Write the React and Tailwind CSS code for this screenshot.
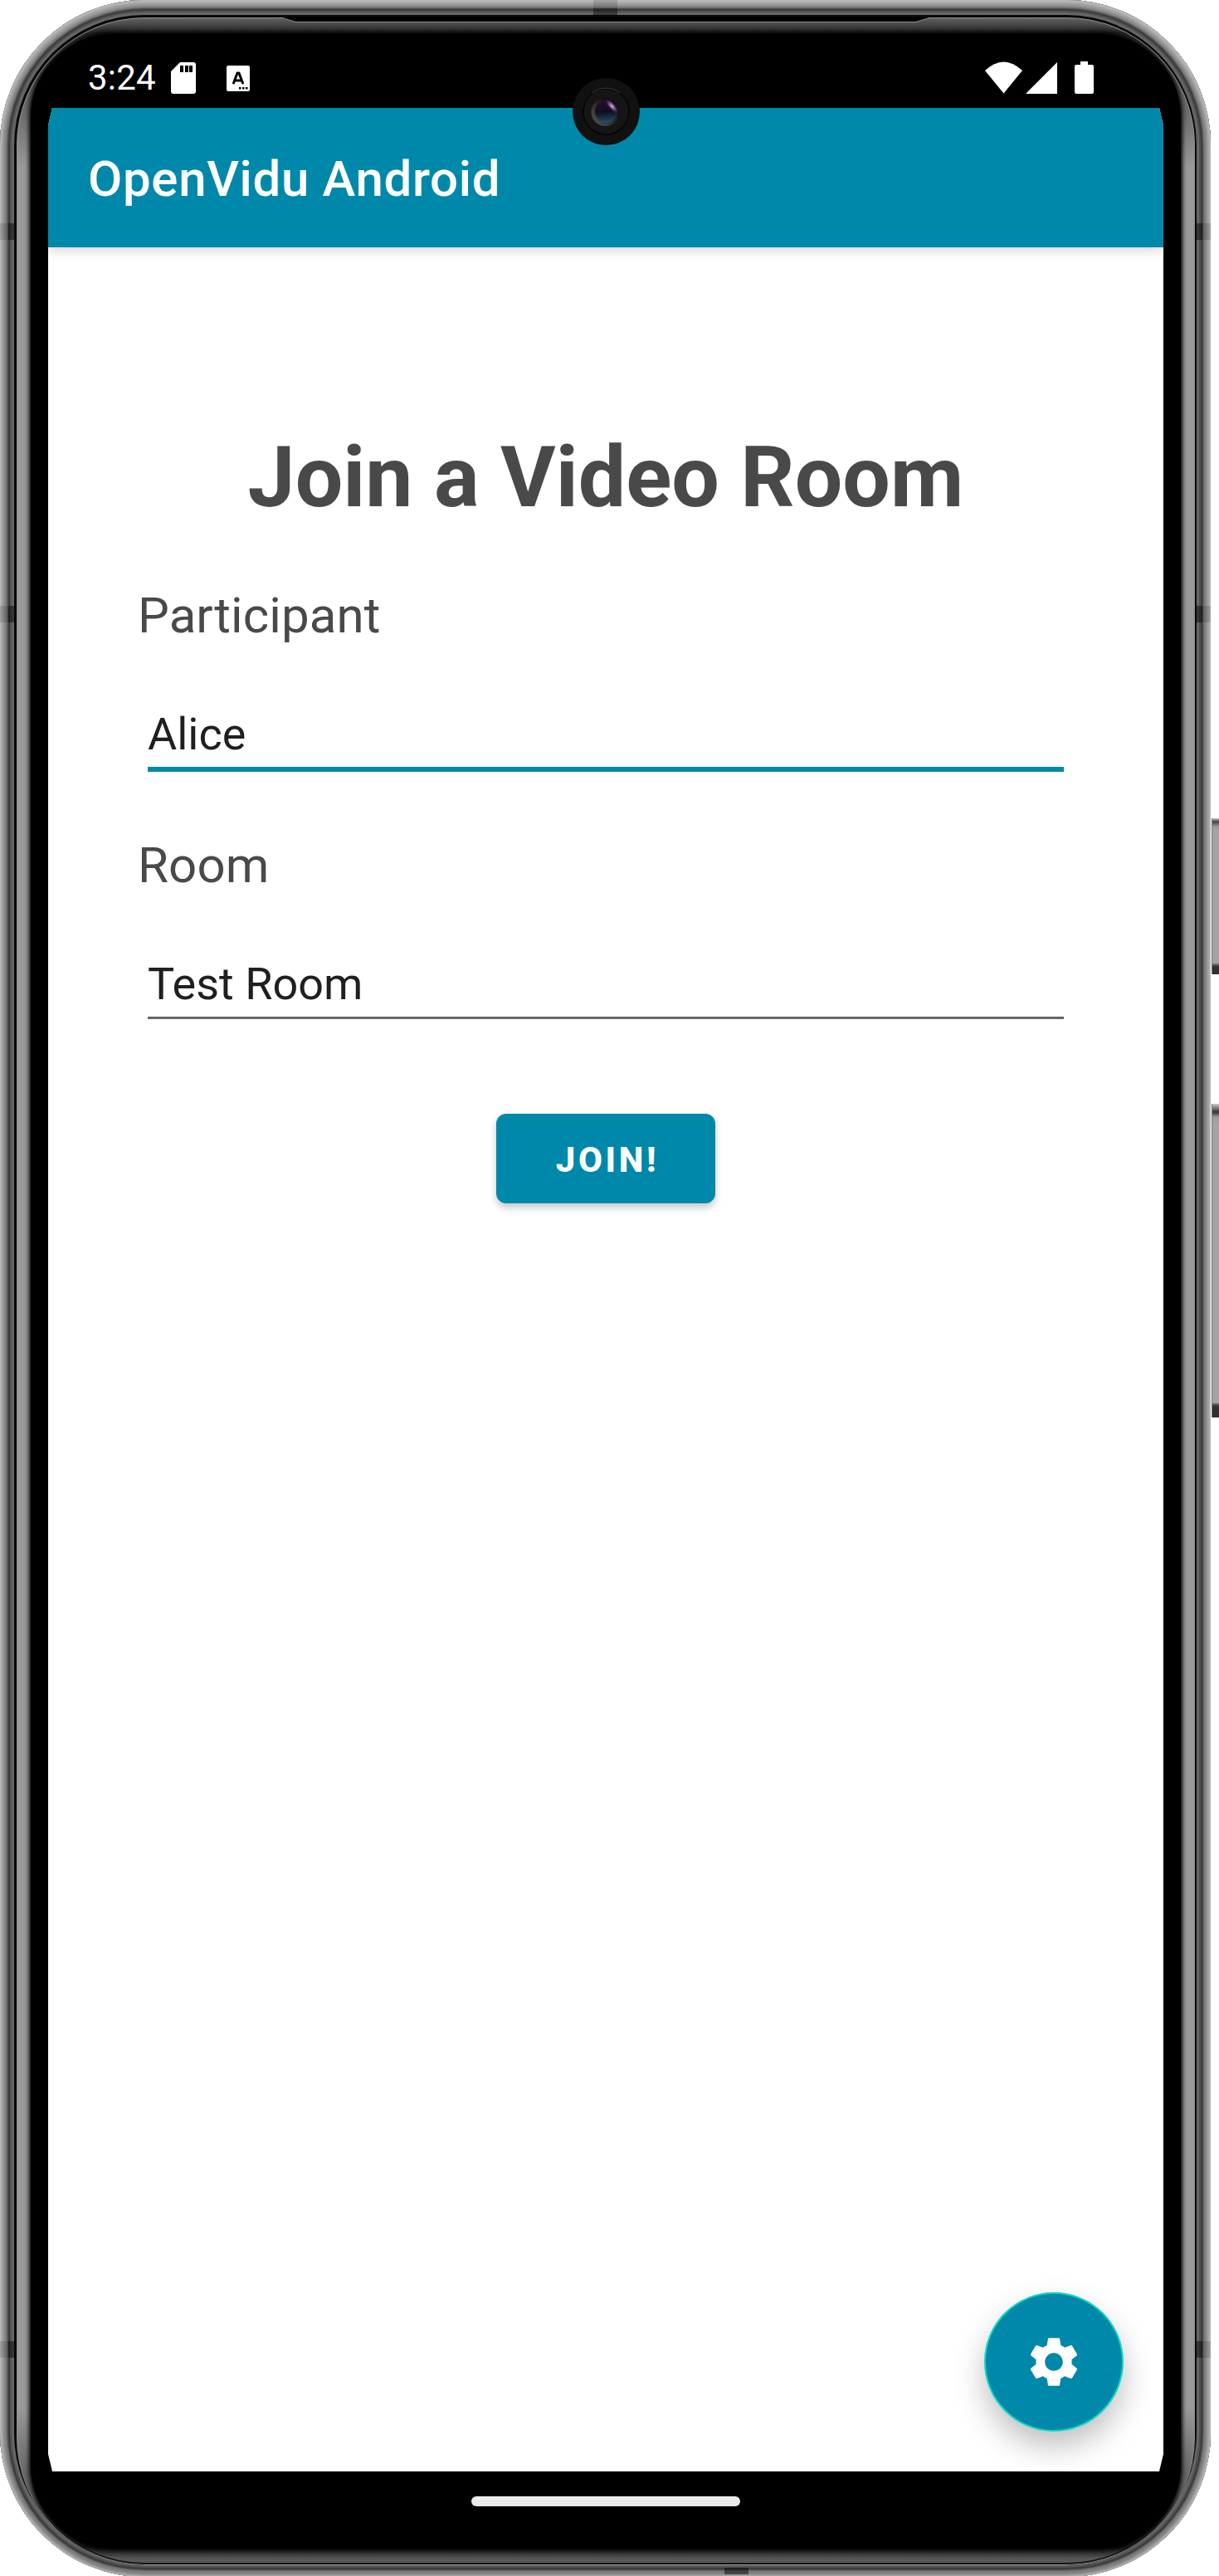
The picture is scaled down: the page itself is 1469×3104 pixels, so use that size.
const GEAR =
  "M19.14 12.94c.04-.3.06-.61.06-.94 0-.32-.02-.64-.07-.94l2.03-1.58a.49.49 0 0 0 .12-.61l-1.92-3.32a.488.488 0 0 0-.59-.22l-2.39.96c-.5-.38-1.03-.7-1.62-.94l-.36-2.54a.484.484 0 0 0-.48-.41h-3.84c-.24 0-.43.17-.47.41l-.36 2.54c-.59.24-1.13.57-1.62.94l-2.39-.96c-.22-.08-.47 0-.59.22L2.74 8.87c-.12.21-.08.47.12.61l2.03 1.58c-.05.3-.09.63-.09.94s.02.64.07.94l-2.03 1.58a.49.49 0 0 0-.12.61l1.92 3.32c.12.22.37.29.59.22l2.39-.96c.5.38 1.03.7 1.62.94l.36 2.54c.05.24.24.41.48.41h3.84c.24 0 .44-.17.47-.41l.36-2.54c.59-.24 1.13-.56 1.62-.94l2.39.96c.22.08.47 0 .59-.22l1.92-3.32c.12-.22.07-.47-.12-.61l-2.01-1.58zM12 15.6c-1.98 0-3.6-1.62-3.6-3.6s1.62-3.6 3.6-3.6 3.6 1.62 3.6 3.6-1.62 3.6-3.6 3.6z";

function SideButtons() {
  return (
    <div className="flex flex-1 flex-col gap-[156px] pl-px pt-[986px]">
      <div className="h-[188px] border-l border-[#777] bg-[linear-gradient(180deg,#ccc_0,#444_4px,#999_10px,#a4a4a4_14px,#a4a4a4_174px,#555_177px,#303030_179px)]" />
      <div className="h-[378px] border-l border-[#777] bg-[linear-gradient(180deg,#ccc_0,#333_10px,#999_16px,#a4a4a4_24px,#a4a4a4_360px,#444_363px,#303030_366px)]" />
    </div>
  );
}

function AntennaRow() {
  return (
    <div className="flex h-5 justify-between">
      <div className="w-[18px] bg-[linear-gradient(90deg,#0002_0,#0002_10px,#0007_10px)]" />
      <div className="w-[18px] bg-[linear-gradient(270deg,#0002_0,#0002_10px,#0007_10px)]" />
    </div>
  );
}

function AntennaBands() {
  return (
    <div className="flex flex-col [grid-area:1/1]">
      <div className="mx-auto h-[19px] w-[29px] bg-[linear-gradient(180deg,#0002_0,#0002_10px,#0006_10px)]" />
      <div className="mt-[250px] flex h-[2572px] flex-col">
        <AntennaRow />
        <div className="h-[441px]" />
        <AntennaRow />
        <div className="flex-1" />
        <AntennaRow />
      </div>
      <div className="mb-[3px] ml-[873px] mt-auto h-2 w-[29px] bg-[#0007]" />
    </div>
  );
}

function Bezel() {
  return (
    <div className="mb-[14px] ml-[20px] mr-[19px] mt-[21px] grid overflow-hidden rounded-[154px] bg-[linear-gradient(180deg,#5c5c5c_0,#4a4a4a_8px,#1c1c1c_19px,#3a3a3a_50px,#999_180px,#999_2880px,#444_3010px,#101010_3048px,#555_3062px,#5a5a5a_3068px)] [grid-area:1/1]">
      <div className="mx-[17px] my-[20px] rounded-[100px] bg-black shadow-[0_0_5px_2px_#000] [grid-area:1/1]" />
      <div className="rounded-[154px] shadow-[inset_0_0_0_1px_#8a8a8a,inset_0_-3px_0_0_#151515,inset_0_0_6px_1px_rgba(190,190,190,0.18)] [grid-area:1/1]" />
      <div className="mx-auto h-[6px] w-[783px] bg-[#909090] [clip-path:polygon(0_0,100%_0,765px_100%,18px_100%)] [grid-area:1/1]" />
      <div className="mx-auto h-[5px] w-[779px] bg-black [clip-path:polygon(0_0,100%_0,763px_100%,16px_100%)] [grid-area:1/1]" />
    </div>
  );
}

function StatusBar() {
  return (
    <div className="flex h-[130px] items-start justify-between pl-[106px] pr-[141px] pt-[73px]">
      <div className="flex items-start">
        <span className="w-[82px] whitespace-nowrap text-[42px] leading-[42px] tracking-[0.2px]">
          3:24
        </span>
        <svg className="ml-[18px] mt-[2px] h-[38px] w-[30px]" viewBox="0 0 30 38">
          <path d="M11 0H27a3 3 0 0 1 3 3V35a3 3 0 0 1-3 3H3a3 3 0 0 1-3-3V11z" fill="#fff" />
          <path d="M11 4h4v8h-4zM17 4h4v8h-4zM22 4h4v8h-4z" fill="#000" />
        </svg>
        <svg className="ml-[37px] mt-[6px] h-[31px] w-[28px]" viewBox="0 0 28 31">
          <rect width="28" height="31" rx="2" fill="#fff" />
          <path d="M8.500 21 13 9h2l4.500 12M10.500 18h7" fill="none" stroke="#000" strokeWidth="3" strokeLinejoin="round" strokeLinecap="round" />
          <path d="M15 26h2.500v2.500H15zM19 26h2.500v2.500H19zM23 26h2.500v2.500H23z" fill="#000" />
        </svg>
      </div>
      <div className="flex items-start pt-px">
        <svg className="h-[39px] w-[45px]" viewBox="0 0 45 39">
          <path d="M0 11Q22.500-10 45 11L22.500 38.500z" fill="#fff" />
        </svg>
        <svg className="ml-[4px] mt-[1px] h-[38px] w-[38px]" viewBox="0 0 38 38">
          <path d="M38 0V38H0z" fill="#fff" />
        </svg>
        <svg className="ml-[21px] h-[39px] w-[23px]" viewBox="0 0 23 39">
          <path d="M7 0h9v4h5a2 2 0 0 1 2 2v31a2 2 0 0 1-2 2H2a2 2 0 0 1-2-2V6a2 2 0 0 1 2-2h5z" fill="#fff" />
        </svg>
      </div>
    </div>
  );
}

function Camera() {
  return (
    <svg className="absolute left-[690px] top-[94px] h-[81px] w-[81px]" viewBox="0 0 81 81">
      <defs>
        <linearGradient id="ring" x1="1" y1="0" x2="0" y2="1">
          <stop offset="0.3" stopColor="#131313" />
          <stop offset="1" stopColor="#5a5a5a" />
        </linearGradient>
        <linearGradient id="lens" x1="0.4" y1="0" x2="0.5" y2="1">
          <stop offset="0" stopColor="#2a0b35" />
          <stop offset="0.5" stopColor="#100e1c" />
          <stop offset="1" stopColor="#20506a" />
        </linearGradient>
        <radialGradient id="glint">
          <stop offset="0" stopColor="#ecc0f8" />
          <stop offset="1" stopColor="#a060c0" stopOpacity="0" />
        </radialGradient>
      </defs>
      <circle cx="40.500" cy="40.500" r="40.500" fill="#111" />
      <circle cx="40.500" cy="40.500" r="27.500" fill="#151515" stroke="#050505" strokeWidth="1.500" />
      <path d="M24 18a27 27 0 0 1 33 0" fill="none" stroke="#2c2c2c" strokeWidth="1.500" />
      <circle cx="39.500" cy="41" r="17" fill="url(#ring)" />
      <circle cx="40.500" cy="40.500" r="13.500" fill="url(#lens)" />
      <ellipse cx="47.500" cy="34" rx="10" ry="4" transform="rotate(48 47.500 34)" fill="url(#glint)" />
    </svg>
  );
}

function Field({ label, value, focused }) {
  return (
    <label className="flex h-[223px] flex-col gap-[76px]">
      <span className="text-[60px] leading-[70px] tracking-[0.1px] text-[#494949]">{label}</span>
      <span
        className={`mx-3 pb-[7px] text-[54px] leading-[64px] text-[#1f1f1f] ${
          focused ? "border-b-[6px] border-[#0088aa]" : "border-b-[3px] border-[#666]"
        }`}
      >
        {value}
      </span>
    </label>
  );
}

function Screen() {
  return (
    <main className="relative ml-[58px] flex h-[2848px] w-[1344px] flex-col bg-white [clip-path:polygon(5px_0,1339px_0,1344px_21px,1344px_2827px,1339px_2848px,5px_2848px,0_2827px,0_21px)]">
      <header className="flex h-[168px] shrink-0 items-center bg-[#0088aa] px-12 pt-1 shadow-[0_3px_14px_rgba(0,0,0,0.18)]">
        <span className="text-[60px] font-medium leading-[70px] tracking-[0.65px]">
          OpenVidu Android
        </span>
      </header>
      <form className="flex flex-col px-[108px] pt-[217px]">
        <h1 className="pb-[72px] text-center text-[102px] font-bold leading-[120px] tracking-[0.05px] text-[#494949]">
          Join a Video Room
        </h1>
        <div className="flex flex-col gap-[78px]">
          <Field label="Participant" value="Alice" focused />
          <Field label="Room" value="Test Room" />
        </div>
        <button
          type="button"
          className="mt-[111px] h-[108px] w-[264px] self-center rounded-xl bg-[#0088aa] pl-1 pt-0.5 text-[42px] font-extrabold tracking-[3.7px] shadow-[0_5px_10px_rgba(0,0,0,0.22)]"
        >
          JOIN!
        </button>
      </form>
      <button className="absolute bottom-12 right-12 flex size-[168px] items-center justify-center rounded-full border-2 border-[#11d8c4] bg-[#0088aa] shadow-[0_18px_36px_rgba(0,0,0,0.25)]">
        <svg className="size-[72px]" viewBox="0 0 24 24" fill="#fff">
          <path d={GEAR} />
        </svg>
      </button>
    </main>
  );
}

function App() {
  return (
    <div
      className="flex h-[3104px] w-[1469px] overflow-hidden bg-white text-white"
      style={{ fontFamily: "Roboto, sans-serif" }}
    >
      <div className="relative grid h-[3105px] w-[1459px] shrink-0 rounded-[174px] shadow-[inset_0_1px_2px_2px_#b8b8b8,inset_0_2px_3px_5px_#a0a0a0,inset_0_1px_2px_9px_#7c7c7c,inset_0_1px_0_12px_#3c3c3c,inset_0_1px_0_14px_#525252,inset_0_1px_0_17px_#666,inset_0_0_0_30px_#080808]">
        <Bezel />
        <AntennaBands />
        <div className="z-10 flex flex-col [grid-area:1/1]">
          <StatusBar />
          <Screen />
          <div className="ml-[568px] mt-[30px] h-3 w-[324px] rounded-full bg-[#ebebeb]" />
        </div>
        <div className="absolute inset-0 z-20">
          <Camera />
        </div>
      </div>
      <SideButtons />
    </div>
  );
}

export default App;
